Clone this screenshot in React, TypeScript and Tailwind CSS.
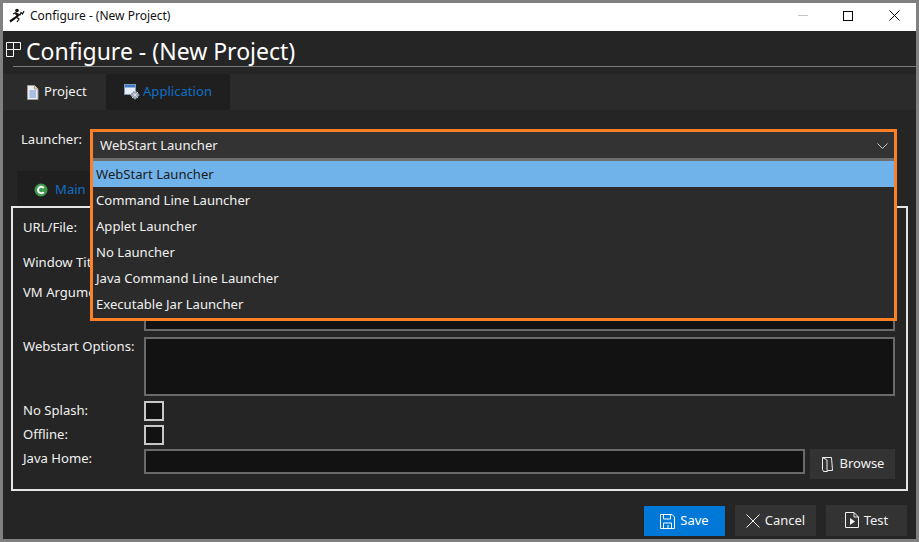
const font = { fontFamily: '"Noto Sans", sans-serif' };

function Runner() {
  return (
    <svg width="16" height="15" viewBox="0 0 16 15" className="ml-[6px] mr-[5px] -mt-[2px]">
      <circle cx="8" cy="2.5" r="1.8" fill="#111" />
      <path d="M6.5 5 L9 7.5 L6 10 L1 13.5" fill="none" stroke="#111" strokeWidth="2.2" />
      <path d="M7 9 L10 11 L8 14 M4 6 L7 4.5 M8 5.5 L11 7 L12 4.5 L13.5 6 L15 3" fill="none" stroke="#111" strokeWidth="1.2" />
    </svg>
  );
}

function PaneIcon() {
  return (
    <svg width="16" height="15" viewBox="0 0 16 15" className="ml-[3px] mr-[4px] mt-[2px] shrink-0">
      <path d="M.5 .5H14.5V7.5H.5Z M7.5 .5V14.5H.5V7.5" fill="none" stroke="#fff" />
    </svg>
  );
}

function DocIcon() {
  return (
    <svg width="13" height="15" viewBox="0 0 13 15" className="mr-[5px]">
      <path d="M1.5 .5H8.5L12 4V14.5H1.5Z" fill="#e8edf7" stroke="#a39f8c" />
      <path d="M8.5 .5V4H12" fill="#f4dca0" stroke="#a39f8c" />
      <path d="M3.5 6H10M3.5 8H10M3.5 10H10M3.5 12H10" stroke="#6d8fc9" />
    </svg>
  );
}

function AppIcon() {
  return (
    <svg width="16" height="16" viewBox="0 0 16 16" className="mr-[3px]">
      <rect x=".5" y=".5" width="11" height="10" fill="#e6edf7" stroke="#7f97b8" />
      <rect x="1" y="1" width="10" height="2.5" fill="#3f78c8" />
      <circle cx="11" cy="11" r="3.8" fill="#7d8a99" />
      <path d="M11 6.5V15.5M6.5 11H15.5M8 8L14 14M14 8L8 14" stroke="#dfe6ee" strokeWidth=".8" />
    </svg>
  );
}

function MainIcon() {
  return (
    <svg width="14" height="14" viewBox="0 0 14 14" className="mr-[7px]">
      <circle cx="7" cy="7" r="6.5" fill="#3f9a4c" />
      <path d="M9.7 5A3.2 3.2 0 1 0 9.7 9" fill="none" stroke="#fff" strokeWidth="2" />
    </svg>
  );
}

function Field({ label, children, h, mb }: { label: string; children?: React.ReactNode; h: string; mb: string }) {
  return (
    <div className={`flex ${h} ${mb}`}>
      <div className="w-[121px] text-[13.1px] leading-[18px] text-[#f0f0f0] whitespace-nowrap">{label}</div>
      {children}
    </div>
  );
}

function Box({ className }: { className: string }) {
  return <div className={`border-2 border-[#6a6a6a] bg-[#121212] ${className}`} />;
}

function Check() {
  return <div className="w-[20px] h-[20px] border-2 border-[#c8c8c8] bg-[#121212]" />;
}

const items = [
  "WebStart Launcher",
  "Command Line Launcher",
  "Applet Launcher",
  "No Launcher",
  "Java Command Line Launcher",
  "Executable Jar Launcher",
];

export default function App() {
  return (
    <div style={font} className="relative w-[919px] h-[542px] overflow-hidden border-[3px] border-[#808080] bg-[#252525] flex flex-col">
      <div className="h-[28px] shrink-0 bg-white flex items-center pb-[2px] text-[12px] text-[#111]">
        <Runner />
        <span>Configure - (New Project)</span>
        <div className="ml-auto flex items-center h-full pb-[1px]">
          <div className="w-[10px] h-[1px] bg-[#c4c4c4] mr-[35px]" />
          <div className="w-[10px] h-[10px] border border-black mr-[36px]" />
          <svg width="11" height="11" viewBox="0 0 11 11" className="mr-[16px]">
            <path d="M.5 .5L10.5 10.5M10.5 .5L.5 10.5" stroke="#000" />
          </svg>
        </div>
      </div>

      <div className="h-[43px] shrink-0 relative">
        <div className="flex items-center h-[35px]">
          <PaneIcon />
          <span className="text-[23px] leading-[36px] pt-[4px] text-white whitespace-nowrap">Configure - (New Project)</span>
        </div>
        <div className="ml-[10px] h-[1px] bg-[#7a7a7a]" />
      </div>

      <div className="h-[36px] shrink-0 bg-[#2b2b2b] flex text-[13.1px]">
        <div className="w-[103px] flex items-center pl-[23px] text-[#f0f0f0]">
          <DocIcon />
          Project
        </div>
        <div className="w-[124px] flex items-center pl-[18px] bg-[#1f1f1f] text-[#0f6fc6]">
          <AppIcon />
          Application
        </div>
      </div>

      <div className="flex-1 relative px-[8px]">
        <div className="h-[61px] pl-[10px] pt-[20px] text-[13.1px] leading-[18px] text-[#f0f0f0]">Launcher:</div>
        <div className="h-[35px] pt-[3px] ml-[6px] w-[80px] bg-[#1f1f1f] flex items-center pl-[17px] text-[13.1px] text-[#0f6fc6]">
          <MainIcon />
          Main
        </div>
        <div className="h-[285px] border-2 border-[#e6e6e6] pl-[10px] pr-[11px] pt-[10px]">
          <Field label="URL/File:" h="h-[24px]" mb="mb-[11px]">
            <Box className="flex-1" />
          </Field>
          <Field label="Window Title:" h="h-[24px]" mb="mb-[6px]">
            <Box className="flex-1" />
          </Field>
          <Field label="VM Arguments:" h="h-[48px]" mb="mb-[6px]">
            <Box className="flex-1" />
          </Field>
          <Field label="Webstart Options:" h="h-[59px]" mb="mb-[5px]">
            <Box className="flex-1" />
          </Field>
          <Field label="No Splash:" h="h-[20px]" mb="mb-[4px]">
            <Check />
          </Field>
          <Field label="Offline:" h="h-[20px]" mb="mb-[4px]">
            <Check />
          </Field>
          <Field label="Java Home:" h="h-[30px]" mb="mb-0">
            <div className="flex-1 flex gap-[5px] items-start">
              <Box className="flex-1 h-[25px]" />
              <div className="w-[85px] h-[30px] bg-[#333333] flex items-center justify-center text-[13px] text-[#f0f0f0]">
                <svg width="13" height="15" viewBox="0 0 13 15" className="mr-[6px]">
                  <path d="M1.5 .5H10.5L11.5 13.5H6.5V14.5H2.5L1.5 12.5ZM1.5 .5L6 3V13.5" fill="none" stroke="#f0f0f0" />
                </svg>
                Browse
              </div>
            </div>
          </Field>
        </div>
        <div className="flex justify-end gap-[10px] mt-[15px] pr-[1px]">
          <div className="w-[81px] h-[30px] bg-[#0078d7] flex items-center justify-center text-[13px] text-white">
            <svg width="15" height="15" viewBox="0 0 15 15" className="mr-[5px]">
              <path d="M.5 .5H12L14.5 3V14.5H.5ZM3.5 .5V5H10.5V.5M3.5 14.5V9H11.5V14.5M8 11V14.5" fill="none" stroke="#fff" />
            </svg>
            Save
          </div>
          <div className="w-[81px] h-[31px] -mt-[1px] bg-[#333333] flex items-center justify-center text-[13px] text-[#f0f0f0]">
            <svg width="14" height="14" viewBox="0 0 14 14" className="mr-[5px]">
              <path d="M.5 .5L13.5 13.5M13.5 .5L.5 13.5" stroke="#f0f0f0" />
            </svg>
            Cancel
          </div>
          <div className="w-[81px] h-[31px] -mt-[1px] bg-[#333333] flex items-center justify-center text-[13px] text-[#f0f0f0]">
            <svg width="14" height="16" viewBox="0 0 14 16" className="mr-[5px] -mt-[2px]">
              <path d="M.5 .5H9L13.5 5V15.5H.5ZM9 .5V5H13.5" fill="none" stroke="#f0f0f0" />
              <path d="M5 6L10 9.5L5 13Z" fill="#f0f0f0" />
            </svg>
            Test
          </div>
        </div>

        <div className="absolute left-[87px] top-[19px] w-[807px] h-[192px] border-[3px] border-[#ff7f27] bg-[#2b2b2b] text-[13.1px] text-[#f0f0f0]">
          <div className="h-[26px] pt-[1px] bg-[#333333] flex items-center pl-[7px] pr-[6px]">
            <span>WebStart Launcher</span>
            <svg width="11" height="6" viewBox="0 0 11 6" className="ml-auto">
              <path d="M.5 .5L5.5 5.5L10.5 .5" fill="none" stroke="#c8c8c8" />
            </svg>
          </div>
          <div className="h-[3px] bg-[#6e6e6e]" />
          {items.map((t, i) => (
            <div key={t} className={`h-[26px] pt-[1px] flex items-center pl-[3px] ${i === 0 ? "bg-[#70b3ea] text-[#1c1c1c]" : ""}`}>
              {t}
            </div>
          ))}
        </div>
      </div>
    </div>
  );
}
